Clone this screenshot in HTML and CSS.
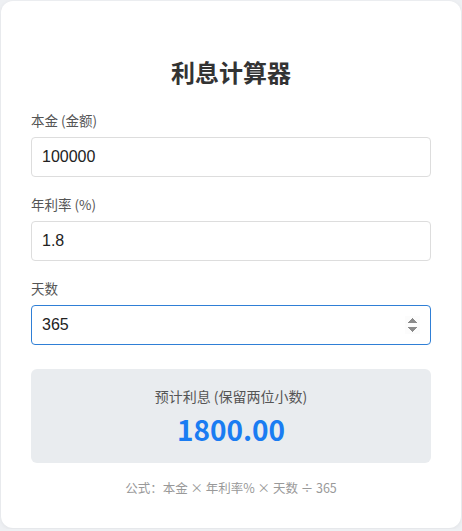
FILE: index.html
```html
<!DOCTYPE html>
<html lang="zh-CN">
<head>
    <meta charset="UTF-8">
    <meta name="viewport" content="width=device-width, initial-scale=1.0">
    <link rel="stylesheet" href="styles.css">
    <title>利息计算器</title>
</head>
<body>
    <div class="calculator">
        <h2 class="title">利息计算器</h2>
        <div class="field">
            <label for="principal">本金 (金额)</label>
            <input type="number" id="principal" value="100000">
        </div>
        <div class="field">
            <label for="rate">年利率 (%)</label>
            <input type="number" id="rate" value="1.8">
        </div>
        <div class="field">
            <label for="days">天数</label>
            <input type="number" id="days" value="365" autofocus>
        </div>
        <div class="result">
            <div class="result-label">预计利息 (保留两位小数)</div>
            <div class="result-value" id="result">1800.00</div>
        </div>
        <p class="formula">公式：本金 × 年利率% × 天数 ÷ 365</p>
    </div>
    <script>
        function calculate() {
            const principal = parseFloat(document.getElementById('principal').value) || 0;
            const rate = parseFloat(document.getElementById('rate').value) || 0;
            const days = parseFloat(document.getElementById('days').value) || 0;
            const interest = principal * rate / 100 * days / 365;
            document.getElementById('result').innerText = interest.toFixed(2);
        }

        document.querySelectorAll('input').forEach(function (input) {
            input.addEventListener('input', calculate);
        });
    </script>
</body>
</html>
```

FILE: styles.css
```css
body {
    margin: 0;
    padding: 1px 0;
    background-color: #eef0f3;
    font-family: "Noto Sans CJK SC", "Liberation Sans", sans-serif;
    display: flex;
    justify-content: center;
}

.calculator {
    box-sizing: border-box;
    width: 460px;
    height: 527px;
    background-color: #ffffff;
    border-radius: 12px;
    padding: 30px;
    box-shadow: 0 1px 4px rgba(0, 0, 0, 0.06);
}

.title {
    margin: 26px 0 23px;
    text-align: center;
    font-size: 24px;
    line-height: 30px;
    color: #333333;
}

.field {
    margin-bottom: 17px;
}

.field label {
    display: block;
    font-size: 13.5px;
    line-height: 20px;
    color: #555555;
    margin-bottom: 7px;
}

.field input {
    box-sizing: border-box;
    width: 100%;
    height: 40px;
    padding: 0 10px;
    font-family: "Liberation Sans", Arial, sans-serif;
    font-size: 16px;
    color: #222222;
    border: 1px solid #dddddd;
    border-radius: 4px;
    outline: none;
}

.field input:focus {
    border-color: #2f7fd6;
}

.result {
    margin-top: 24px;
    background-color: #e9ecef;
    border-radius: 6px;
    height: 94px;
    box-sizing: border-box;
    padding-top: 16px;
    text-align: center;
}

.result-label {
    font-size: 14px;
    line-height: 22px;
    color: #555555;
}

.result-value {
    margin-top: 4px;
    font-size: 28px;
    line-height: 36px;
    font-weight: bold;
    color: #1a7cf2;
}

.formula {
    margin: 16px 0 0;
    text-align: center;
    font-size: 12.5px;
    line-height: 18px;
    color: #999999;
}
```
